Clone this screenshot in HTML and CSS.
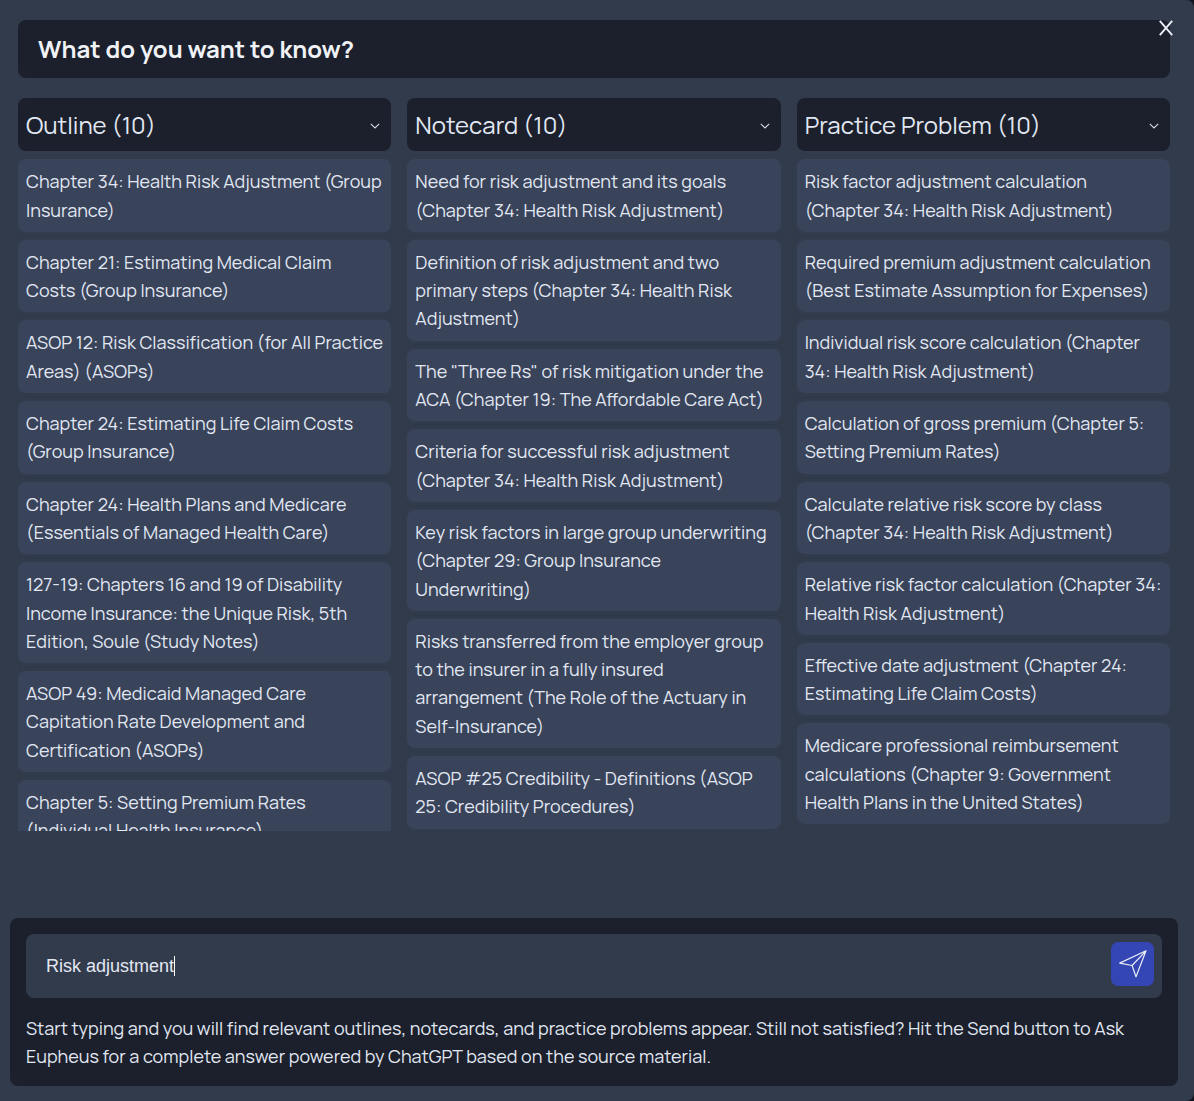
FILE: index.html
```html
<!DOCTYPE html>
<html lang="en">
<head>
  <meta charset="UTF-8" />
  <meta name="viewport" content="width=device-width, initial-scale=1" />
  <title>Ask Eupheus</title>
  <link rel="stylesheet" href="styles.css">
</head>
<body>
  <div class="modal">
    <button class="close" aria-label="Close">
      <svg width="14" height="16" viewBox="0 0 14 16"><path d="M.8.8 13.2 15.2M13.2.8.8 15.2"/></svg>
    </button>
    <h2 class="title">What do you want to know?</h2>

    <div class="results">
      <section class="column">
        <div class="column-header">
          <span>Outline (10)</span>
          <svg class="chevron" width="10" height="6" viewBox="0 0 10 6"><path d="M.8.8 5 5 9.2.8"/></svg>
        </div>
        <ul>
          <li>Chapter 34: Health Risk Adjustment (Group Insurance)</li>
          <li>Chapter 21: Estimating Medical Claim Costs (Group Insurance)</li>
          <li>ASOP 12: Risk Classification (for All Practice Areas) (ASOPs)</li>
          <li>Chapter 24: Estimating Life Claim Costs (Group Insurance)</li>
          <li>Chapter 24: Health Plans and Medicare (Essentials of Managed Health Care)</li>
          <li>127-19: Chapters 16 and 19 of Disability Income Insurance: the Unique Risk, 5th Edition, Soule (Study Notes)</li>
          <li>ASOP 49: Medicaid Managed Care Capitation Rate Development and Certification (ASOPs)</li>
          <li>Chapter 5: Setting Premium Rates (Individual Health Insurance)</li>
        </ul>
      </section>

      <section class="column">
        <div class="column-header">
          <span>Notecard (10)</span>
          <svg class="chevron" width="10" height="6" viewBox="0 0 10 6"><path d="M.8.8 5 5 9.2.8"/></svg>
        </div>
        <ul>
          <li>Need for risk adjustment and its goals (Chapter 34: Health Risk Adjustment)</li>
          <li>Definition of risk adjustment and two primary steps (Chapter 34: Health Risk Adjustment)</li>
          <li>The "Three Rs" of risk mitigation under the ACA (Chapter 19: The Affordable Care Act)</li>
          <li>Criteria for successful risk adjustment (Chapter 34: Health Risk Adjustment)</li>
          <li>Key risk factors in large group underwriting (Chapter 29: Group Insurance Underwriting)</li>
          <li>Risks transferred from the employer group to the insurer in a fully insured arrangement (The Role of the Actuary in Self-Insurance)</li>
          <li>ASOP #25 Credibility - Definitions (ASOP 25: Credibility Procedures)</li>
        </ul>
      </section>

      <section class="column">
        <div class="column-header">
          <span>Practice Problem (10)</span>
          <svg class="chevron" width="10" height="6" viewBox="0 0 10 6"><path d="M.8.8 5 5 9.2.8"/></svg>
        </div>
        <ul>
          <li>Risk factor adjustment calculation (Chapter 34: Health Risk Adjustment)</li>
          <li>Required premium adjustment calculation (Best Estimate Assumption for Expenses)</li>
          <li>Individual risk score calculation (Chapter 34: Health Risk Adjustment)</li>
          <li>Calculation of gross premium (Chapter 5: Setting Premium Rates)</li>
          <li>Calculate relative risk score by class (Chapter 34: Health Risk Adjustment)</li>
          <li>Relative risk factor calculation (Chapter 34: Health Risk Adjustment)</li>
          <li>Effective date adjustment (Chapter 24: Estimating Life Claim Costs)</li>
          <li>Medicare professional reimbursement calculations (Chapter 9: Government Health Plans in the United States)</li>
        </ul>
      </section>
    </div>

    <div class="ask">
      <div class="ask-box">
        <div class="ask-input" contenteditable="true">Risk adjustment<span class="caret"></span></div>
        <button class="send" aria-label="Send">
          <svg width="28" height="28" viewBox="0 0 28 28"><path d="M27 .8 .7 13.1l12.4 2.4L17 26.8zM27 .8 13.1 15.5"/></svg>
        </button>
      </div>
      <p>Start typing and you will find relevant outlines, notecards, and practice problems appear. Still not satisfied? Hit the Send button to Ask Eupheus for a complete answer powered by ChatGPT based on the source material.</p>
    </div>
  </div>
</body>
</html>
```

FILE: styles.css
```css
* {
  box-sizing: border-box;
}
body {
  margin: 0;
  background-color: #10141c;
  font-family: Manrope, Inter, sans-serif;
  font-size: 18px;
  line-height: 28.3px;
  color: #e2e8f3;
}
.modal {
  position: relative;
  display: flex;
  flex-direction: column;
  height: 1101px;
  padding: 20px 16px 15px 10px;
  background-color: #323b4b;
  border-radius: 0 8px 8px 0;
  overflow: hidden;
}
.close {
  position: absolute;
  top: 20px;
  right: 21px;
  padding: 0;
  border: none;
  background: none;
  line-height: 0;
  cursor: pointer;
}
svg {
  fill: none;
  stroke: #e9edf5;
}
.close svg {
  stroke-width: 1.9;
}
.title {
  margin: 0 8px 20px;
  height: 58px;
  padding: 0 20px;
  background-color: #1b202c;
  border-radius: 8px;
  font-size: 24px;
  font-weight: 700;
  line-height: 58px;
  color: #f0f2f6;
}
.results {
  display: grid;
  grid-template-columns: repeat(3, 1fr);
  gap: 16px;
  height: 733px;
  margin: 0 8px;
  overflow: hidden;
}
.column-header {
  display: flex;
  align-items: center;
  justify-content: space-between;
  height: 53px;
  margin-bottom: 8.3px;
  padding: 2px 11px 0 8px;
  background-color: #1b202c;
  border-radius: 8px;
  font-size: 24px;
}
.chevron {
  stroke-width: 1.1;
  stroke: #d5dae3;
}
ul {
  margin: 0;
  padding: 0;
  list-style: none;
}
li {
  margin-bottom: 8px;
  padding: 8px;
  background-color: #39435a;
  border-radius: 8px;
  box-shadow: 0 0 4px rgba(57, 67, 90, 0.5);
}
.ask {
  height: 168px;
  margin-top: auto;
  padding: 16px;
  background-color: #1b202c;
  border-radius: 8px;
}
.ask-box {
  display: flex;
  align-items: flex-start;
  justify-content: space-between;
  height: 64px;
  padding: 8px 8px 8px 20px;
  background-color: #323b4b;
  border-radius: 8px;
}
.ask-input {
  display: flex;
  align-items: center;
  height: 48px;
  font-family: "Liberation Sans", Arial, sans-serif;
  font-size: 18px;
  outline: none;
}
.caret {
  width: 1px;
  height: 20px;
  background-color: #fff;
}
.send {
  display: flex;
  align-items: center;
  justify-content: center;
  width: 43px;
  height: 44px;
  padding: 0;
  border: none;
  border-radius: 7px;
  background-color: #3445b4;
  cursor: pointer;
}
.send svg {
  stroke-width: 1.2;
  stroke-linejoin: round;
}
.ask p {
  margin: 16px 0 0;
}
```
